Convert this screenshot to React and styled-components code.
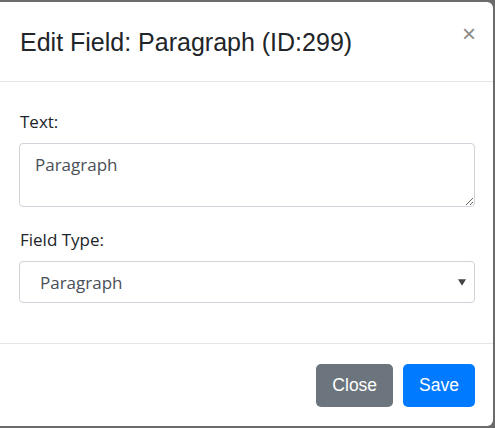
import React from "react"
import styled, { createGlobalStyle } from "styled-components"

const GlobalStyle = createGlobalStyle`
    html, body {
        margin: 0;
        padding: 0;
        background: #6b6b6b;
    }
    * { box-sizing: border-box; }
`

export default function App() {
    return (
        <>
            <GlobalStyle />
            <Modal>
                <Header>
                    <Title>Edit Field: Paragraph (ID:299)</Title>
                    <CloseX>×</CloseX>
                </Header>
                <Body>
                    <Label>Text:</Label>
                    <TextArea defaultValue="Paragraph" />
                    <Label $top={21}>Field Type:</Label>
                    <SelectWrap>
                        <Select defaultValue="Paragraph">
                            <option>Paragraph</option>
                            <option>Text</option>
                            <option>Checkbox</option>
                        </Select>
                        <Caret viewBox="0 0 10 8">
                            <path d="M0 0 L10 0 L5 8 Z" fill="#444" />
                        </Caret>
                    </SelectWrap>
                </Body>
                <Footer>
                    <Button $color="#6c757d">Close</Button>
                    <Button $color="#007bff">Save</Button>
                </Footer>
            </Modal>
        </>
    )
}

const Modal = styled.div`
    width: 493px;
    height: 424px;
    margin-top: 2px;
    background: #fff;
    border-radius: 0 6px 6px 0;
    display: flex;
    flex-direction: column;
`
const Header = styled.div`
    height: 80px;
    padding: 22px 20px 0 20px;
    display: flex;
    justify-content: space-between;
    align-items: flex-start;
    border-bottom: 1px solid #e5e5e5;
`
const Title = styled.h5`
    margin: 0;
    font-family: "Liberation Sans", Arial, sans-serif;
    font-size: 25px;
    font-weight: 400;
    line-height: 36px;
    color: #212529;
`
const CloseX = styled.span`
    font-family: "Liberation Sans", Arial, sans-serif;
    font-size: 24px;
    line-height: 24px;
    color: #8a8a8a;
    margin-top: -2px;
    margin-right: -3px;
    cursor: pointer;
`
const Body = styled.div`
    padding: 28px 18px 0 19px;
    height: 262px;
    border-bottom: 1px solid #e5e5e5;
    display: flex;
    flex-direction: column;
`
const Label = styled.label`
    font-family: "Open Sans", "Noto Sans", sans-serif;
    font-size: 17px;
    line-height: 24px;
    color: #212529;
    margin-top: ${p => p.$top || 0}px;
    margin-bottom: 9px;
    padding-left: 1px;
`
const TextArea = styled.textarea`
    width: 100%;
    height: 64px;
    padding: 9px 15px;
    font-family: "Open Sans", "Noto Sans", sans-serif;
    font-size: 17px;
    line-height: 24px;
    color: #495057;
    border: 1px solid #ced4da;
    border-radius: 4px;
    outline: none;
`
const SelectWrap = styled.div`
    position: relative;
    width: 100%;
`
const Select = styled.select`
    width: 100%;
    height: 42px;
    padding: 0 16px 0 20px;
    appearance: none;
    font-family: "Open Sans", "Noto Sans", sans-serif;
    font-size: 17px;
    color: #495057;
    background: #fff;
    border: 1px solid #ced4da;
    border-radius: 4px;
    outline: none;
`
const Caret = styled.svg`
    position: absolute;
    right: 9px;
    top: 18px;
    width: 8px;
    height: 7px;
    pointer-events: none;
`
const Footer = styled.div`
    flex: 1;
    display: flex;
    justify-content: flex-end;
    align-items: flex-start;
    gap: 10px;
    padding: 20px 18px 0 0;
`
const Button = styled.button`
    height: 43px;
    padding: 0 16px;
    border: none;
    border-radius: 5px;
    background: ${p => p.$color};
    color: #fff;
    font-family: "Liberation Sans", Arial, sans-serif;
    font-size: 17.5px;
    line-height: 43px;
    cursor: pointer;
`
